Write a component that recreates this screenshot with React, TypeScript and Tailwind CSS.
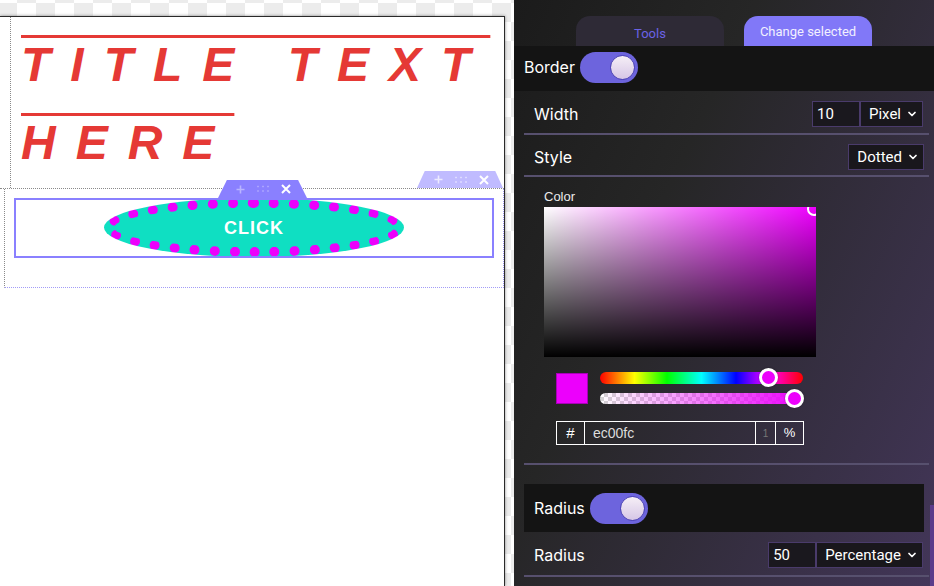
import { ChevronDown } from 'lucide-react';

function TabIcons({ light }: { light?: boolean }) {
  const dim = light ? '#eceaff' : '#b9b4ff';
  return (
    <div className="flex h-full items-center justify-center gap-[12px] pl-[2px]">
      <svg width="9" height="9" viewBox="0 0 9 9">
        <path d="M4.5 0.5v8M0.5 4.5h8" stroke={dim} strokeWidth="1.6" />
      </svg>
      <svg width="12" height="8" viewBox="0 0 12 8">
        {[1, 6, 11].map((x) =>
          [1.5, 6].map((y) => <rect key={`${x}-${y}`} x={x - 0.7} y={y - 0.7} width="1.4" height="1.4" fill={dim} />)
        )}
      </svg>
      <svg width="10" height="10" viewBox="0 0 10 10">
        <path d="M1 1l8 8M9 1l-8 8" stroke="#ffffff" strokeWidth="2" />
      </svg>
    </div>
  );
}

function Toggle() {
  return (
    <div className="flex h-[31px] w-[58px] items-center justify-end rounded-full bg-[#6d64dd] pr-[3px]">
      <div className="h-[25px] w-[25px] rounded-full border border-[#4b42b4] bg-gradient-to-b from-[#f6eff6] to-[#d6c6e6]" />
    </div>
  );
}

function Select({ label }: { label: string }) {
  return (
    <div className="flex h-[26px] items-center gap-[5px] border border-[#4a3b6b] bg-[#19171c] pl-[8px] pr-[4px] font-['Roboto',sans-serif] text-[15px] text-white">
      <span>{label}</span>
      <ChevronDown size={12} strokeWidth={3.5} color="#ffffff" />
    </div>
  );
}

function NumberBox({ value }: { value: string }) {
  return (
    <div className="flex h-[26px] w-[48px] items-center border border-[#4a3b6b] bg-[#1a181e] pl-[4px] font-['Roboto',sans-serif] text-[15px] text-white">
      {value}
    </div>
  );
}

export default function App() {
  return (
    <div className="flex h-[586px] w-[934px] overflow-hidden">
      {/* canvas side */}
      <div className="h-[586px] w-[514px] shrink-0 overflow-hidden bg-[repeating-conic-gradient(#ececec_0_25%,#ffffff_0_50%)] bg-[length:38px_38px] bg-[position:-2px_-16px]">
        <div className="mt-[16px] h-[570px] w-[505px] border-t border-r border-[#2a2a2a] bg-white shadow-[0_0_3px_rgba(0,0,0,0.45)]">
          <div className="border-b border-dotted border-[#8a8a8a]">
            <div className="ml-[10px] border-l border-dotted border-[#8a8a8a] pt-[9px] pb-[6px] pl-[10px]">
              <h1 className="font-['Liberation_Sans',Arial,sans-serif] text-[48px] leading-[78px] font-bold tracking-[20px] text-[#e53935] italic overline [text-decoration-thickness:3px]">
                TITLE TEXT HERE
              </h1>
            </div>
          </div>

          <div className="relative ml-[4px] border-x border-b border-dotted border-[#a29cf7] border-l-[#8a8a8a] px-[9px] pt-[9px] pb-[29px]">
            <div className="absolute top-[-18px] right-0 h-[17px] w-[86px] bg-[#c0bbff] [clip-path:polygon(9%_0,91%_0,100%_100%,0_100%)]">
              <TabIcons light />
            </div>

            <div className="relative flex h-[60px] justify-center">
              <button className="h-[59px] w-[300px] rounded-[50%] border-[10px] border-dotted border-[#ec00fc] bg-[#0fdfc2] pt-[2px] font-['Liberation_Sans',Arial,sans-serif] text-[18px] font-bold tracking-[1px] text-white">
                CLICK
              </button>
              <div className="pointer-events-none absolute inset-0 border-2 border-[#8a80ff]" />
              <div className="absolute top-[-18px] left-[204px] h-[18px] w-[89px] bg-[#8a80ff] [clip-path:polygon(10%_0,90%_0,100%_100%,0_100%)]">
                <TabIcons />
              </div>
            </div>
          </div>
        </div>
      </div>

      {/* settings panel */}
      <div className="relative h-[586px] w-[420px] shrink-0 bg-[linear-gradient(115deg,#1b1b1b_0%,#262626_35%,#433659_100%)] font-['Inter',sans-serif] text-white">
        <div className="flex justify-center gap-[20px] pt-[16px]">
          <div className="flex h-[30px] w-[148px] items-center justify-center rounded-t-[14px] bg-[#2e2a36] pt-[5px] font-['Roboto',sans-serif] text-[13px] text-[#6b62e6]">
            Tools
          </div>
          <div className="flex h-[30px] w-[128px] items-center justify-center rounded-t-[14px] bg-[#8178f8] pt-[2px] font-['Roboto',sans-serif] text-[13px] text-[#f2f0ff]">
            Change selected
          </div>
        </div>

        <div className="flex h-[45px] items-center gap-[5px] bg-[#141414] pb-[3px] pl-[10px] text-[16px]">
          <span>Border</span>
          <Toggle />
        </div>

        <div className="ml-[10px] flex w-[405px] items-center justify-between border-b-2 border-[#57506e] pt-[10px] pr-[6px] pb-[6px] pl-[10px] text-[16px]">
          <span>Width</span>
          <div className="flex">
            <NumberBox value="10" />
            <Select label="Pixel" />
          </div>
        </div>

        <div className="ml-[10px] flex w-[405px] items-center justify-between border-b-2 border-[#57506e] pt-[9px] pr-[5px] pb-[5px] pl-[10px] text-[16px]">
          <span>Style</span>
          <Select label="Dotted" />
        </div>

        <div className="ml-[10px] w-[405px] border-b-2 border-[#57506e] pt-[12px] pb-[18px] pl-[20px] font-['Liberation_Sans',Arial,sans-serif]">
          <div className="text-[13px] leading-[16px] text-[#ececec]">Color</div>
          <div className="relative mt-[2px] h-[150px] w-[272px] overflow-hidden bg-[#ef00ff]">
            <div className="h-full w-full bg-[linear-gradient(to_top,#000,transparent),linear-gradient(to_right,#fff,transparent)]" />
            <div className="absolute top-[-5px] right-[-5px] h-[14px] w-[14px] rounded-full border-2 border-white" />
          </div>

          <div className="mt-[15px] flex items-start gap-[12px] pl-[12px]">
            <div className="mt-[1px] h-[31px] w-[32px] border border-[#a800b8] bg-[#ec00fc]" />
            <div className="flex w-[203px] flex-col gap-[9px]">
              <div className="relative h-[12px] rounded-full bg-[linear-gradient(to_right,#f00_0%,#ff0_17%,#0f0_33%,#0ff_50%,#00f_67%,#f0f_83%,#f00_100%)]">
                <div className="absolute top-[-4px] left-[159px] h-[19px] w-[19px] rounded-full border-[3px] border-white bg-[#ec00fc] shadow-[0_0_2px_rgba(0,0,0,0.4)]" />
              </div>
              <div className="relative h-[11px] rounded-full bg-[repeating-conic-gradient(#d4d4d4_0_25%,#ffffff_0_50%)] bg-[length:8px_8px]">
                <div className="h-full w-full rounded-full bg-[linear-gradient(to_right,rgba(236,0,252,0),#ec00fc)]" />
                <div className="absolute top-[-4px] left-[185px] h-[19px] w-[19px] rounded-full border-[3px] border-white bg-[#ec00fc] shadow-[0_0_2px_rgba(0,0,0,0.4)]" />
              </div>
            </div>
          </div>

          <div className="mt-[17px] ml-[12px] flex h-[24px] w-[248px] border border-white text-[13px]">
            <div className="flex w-[28px] items-center justify-center border-r border-white text-[15px]">#</div>
            <div className="flex flex-1 items-center border-r border-white pl-[8px] text-[14px] text-[#dcdcdc]">ec00fc</div>
            <div className="flex w-[20px] items-center justify-center border-r border-white text-[10px] text-[#777]">1</div>
            <div className="flex w-[27px] items-center justify-center">%</div>
          </div>
        </div>

        <div className="mt-[19px] ml-[10px] flex h-[48px] w-[400px] items-center gap-[5px] bg-[#141414] pl-[10px] text-[16px]">
          <span>Radius</span>
          <Toggle />
        </div>

        <div className="ml-[10px] flex w-[405px] items-center justify-between border-b-2 border-[#57506e] pt-[10px] pr-[6px] pb-[7px] pl-[10px] text-[16px]">
          <span>Radius</span>
          <div className="flex">
            <NumberBox value="50" />
            <Select label="Percentage" />
          </div>
        </div>

        <div className="absolute top-[505px] right-0 h-[81px] w-[4px] bg-[#5b3b8a]" />
      </div>
    </div>
  );
}
